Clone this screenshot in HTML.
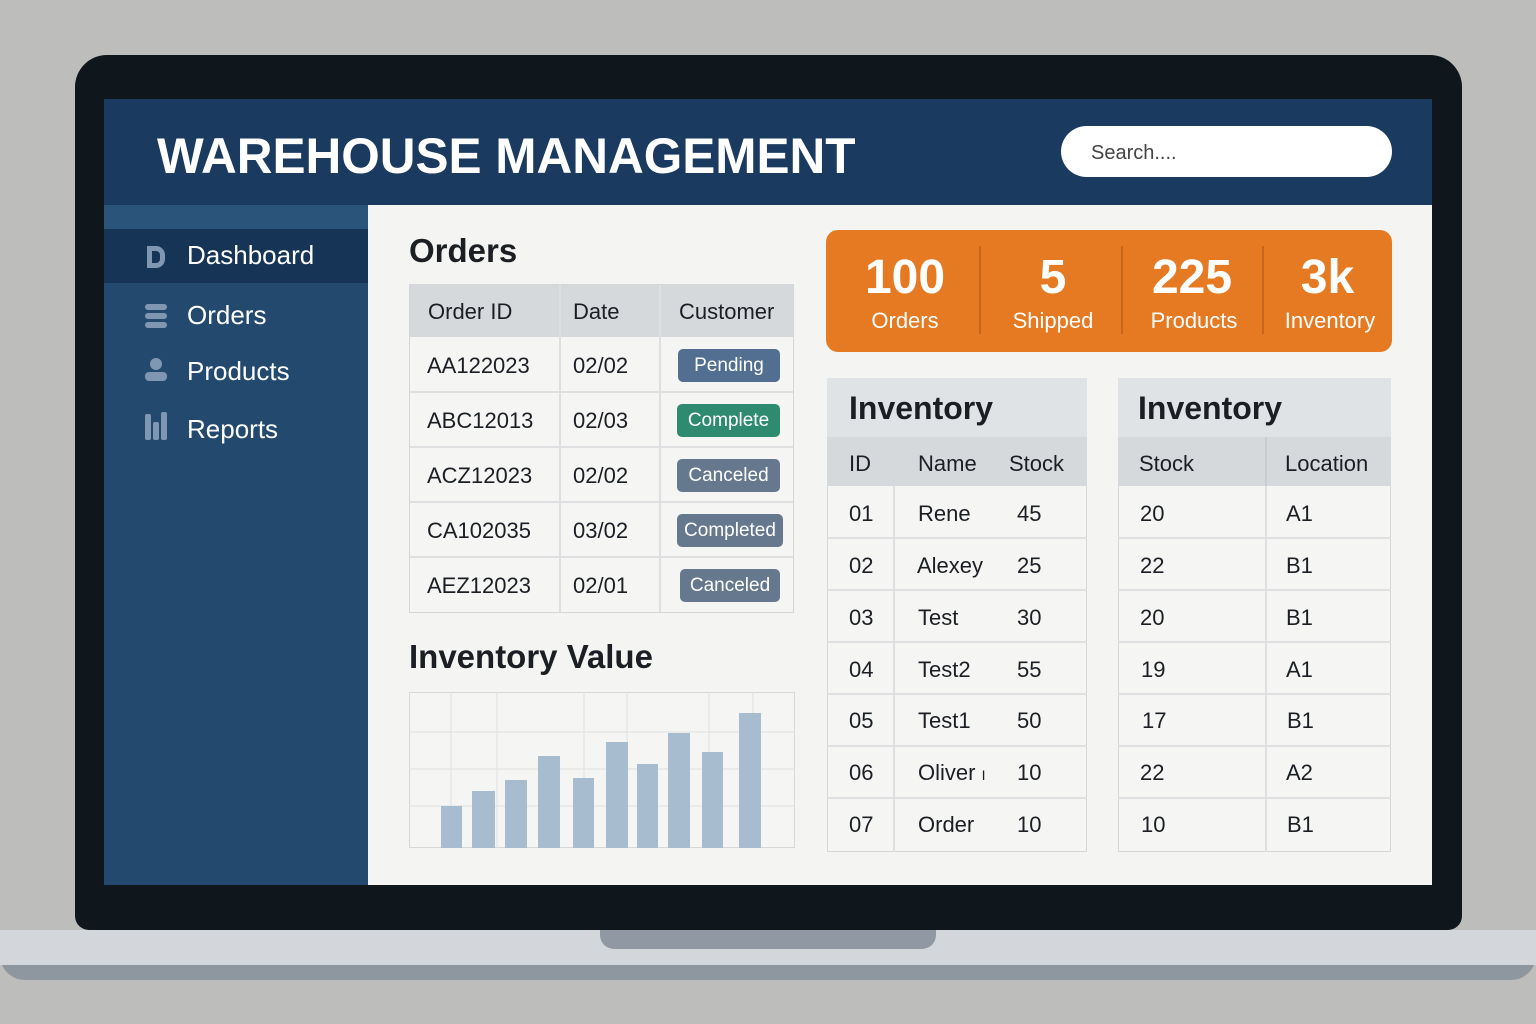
<!DOCTYPE html>
<html><head><meta charset="utf-8"><style>
*{margin:0;padding:0;box-sizing:border-box}
body{width:1536px;height:1024px;background:#bdbdbb;position:relative;overflow:hidden;font-family:"Liberation Sans","DejaVu Sans",sans-serif}
div{position:absolute}
.t{white-space:nowrap;color:#1b1f24;font-size:22px;line-height:1}
.w{color:#fff}
.hl{background:#d6d9dc}
.bd{border:1px solid #d4d6d8}
.hline{height:2px;background:#dedfe0}
.vline{width:2px;background:#dedfe0}
.badge{color:#fff;font-size:19px;border-radius:5px;text-align:center;line-height:33px;height:33px}
</style></head><body>
<div style="left:0;top:955px;width:1536px;height:25px;background:#8e96a0;border-radius:0 0 60px 60px"></div>
<div style="left:0;top:930px;width:1536px;height:35px;background:#d3d6da"></div>
<div style="left:600px;top:930px;width:336px;height:19px;background:#8f98a3;border-radius:0 0 14px 14px"></div>
<div style="left:75px;top:55px;width:1387px;height:875px;background:#0f161c;border-radius:32px 32px 14px 14px"></div>
<div style="left:104px;top:99px;width:1328px;height:786px;background:#f4f4f2"></div>
<div style="left:104px;top:99px;width:1328px;height:106px;background:#1a3a5f"></div>
<div class="t w" style="left:157px;top:131px;font-size:50px;font-weight:bold;transform:scaleX(0.99);transform-origin:left">WAREHOUSE MANAGEMENT</div>
<div style="left:1061px;top:126px;width:331px;height:51px;background:#fff;border-radius:26px"></div>
<div class="t" style="left:1091px;top:143px;font-size:20px;color:#444">Search....</div>
<div style="left:104px;top:205px;width:264px;height:680px;background:#234a6e"></div>
<div style="left:104px;top:205px;width:264px;height:24px;background:#2a547a"></div>
<div style="left:104px;top:229px;width:264px;height:54px;background:#163456"></div>
<svg style="position:absolute;left:145px;top:244px" width="22" height="26" viewBox="0 0 22 26"><path d="M2 2h9a9 9 0 0 1 9 9v4a9 9 0 0 1-9 9H2z" fill="#7f97b2"/><path d="M7 7h4a4 4 0 0 1 4 4v4a4 4 0 0 1-4 4H7z" fill="#163456"/></svg>
<div class="t w" style="left:187px;top:242px;font-size:26px">Dashboard</div>
<svg style="position:absolute;left:145px;top:304px" width="22" height="24"><rect x="0" y="0" width="22" height="6" rx="3" fill="#7f97b2"/><rect x="0" y="9" width="22" height="6" rx="3" fill="#7f97b2"/><rect x="0" y="18" width="22" height="6" rx="3" fill="#7f97b2"/></svg>
<div class="t w" style="left:187px;top:302px;font-size:26px">Orders</div>
<svg style="position:absolute;left:145px;top:358px" width="22" height="24"><circle cx="11" cy="6" r="6" fill="#7f97b2"/><rect x="0" y="14" width="22" height="9" rx="4" fill="#7f97b2"/></svg>
<div class="t w" style="left:187px;top:358px;font-size:26px">Products</div>
<svg style="position:absolute;left:145px;top:412px" width="22" height="28"><rect x="0" y="2" width="6" height="26" rx="2" fill="#7f97b2"/><rect x="8" y="10" width="6" height="18" rx="2" fill="#7f97b2"/><rect x="16" y="0" width="6" height="28" rx="2" fill="#7f97b2"/></svg>
<div class="t w" style="left:187px;top:416px;font-size:26px">Reports</div>

<div class="t" style="left:409px;top:234px;font-size:33px;font-weight:bold">Orders</div>
<div class="bd" style="left:409px;top:284px;width:385px;height:329px;background:#f5f5f4"></div>
<div class="hl" style="left:410px;top:285px;width:383px;height:52px"></div>
<div class="vline" style="left:559px;top:285px;height:327px"></div>
<div class="vline" style="left:659px;top:285px;height:327px"></div>
<div class="hline" style="left:410px;top:391px;width:383px"></div>
<div class="hline" style="left:410px;top:446px;width:383px"></div>
<div class="hline" style="left:410px;top:501px;width:383px"></div>
<div class="hline" style="left:410px;top:556px;width:383px"></div>
<div class="t" style="left:428px;top:301px">Order ID</div>
<div class="t" style="left:573px;top:301px">Date</div>
<div class="t" style="left:679px;top:301px">Customer</div>
<div class="t" style="left:427px;top:355px">AA122023</div><div class="t" style="left:573px;top:355px">02/02</div>
<div class="badge" style="left:678px;top:349px;width:102px;background:#526e91">Pending</div>
<div class="t" style="left:427px;top:410px">ABC12013</div><div class="t" style="left:573px;top:410px">02/03</div>
<div class="badge" style="left:677px;top:404px;width:103px;background:#2f8b6f">Complete</div>
<div class="t" style="left:427px;top:465px">ACZ12023</div><div class="t" style="left:573px;top:465px">02/02</div>
<div class="badge" style="left:677px;top:459px;width:103px;background:#66788d">Canceled</div>
<div class="t" style="left:427px;top:520px">CA102035</div><div class="t" style="left:573px;top:520px">03/02</div>
<div class="badge" style="left:677px;top:514px;width:106px;background:#66788d">Completed</div>
<div class="t" style="left:427px;top:575px">AEZ12023</div><div class="t" style="left:573px;top:575px">02/01</div>
<div class="badge" style="left:680px;top:569px;width:100px;background:#66788d">Canceled</div>

<div class="t" style="left:409px;top:640px;font-size:33px;font-weight:bold">Inventory Value</div>
<svg style="position:absolute;left:409px;top:692px" width="386" height="156">
<rect x="0.5" y="0.5" width="385" height="155" fill="#f5f5f4" stroke="#d8d8d8"/>
<g stroke="#e0e0e0"><line x1="0" y1="40" x2="386" y2="40"/><line x1="0" y1="77" x2="386" y2="77"/><line x1="0" y1="114" x2="386" y2="114"/>
<line x1="42" y1="0" x2="42" y2="156"/><line x1="88" y1="0" x2="88" y2="156"/><line x1="175" y1="0" x2="175" y2="156"/><line x1="218" y1="0" x2="218" y2="156"/><line x1="300" y1="0" x2="300" y2="156"/><line x1="344" y1="0" x2="344" y2="156"/></g>
<g fill="#a7bccf"><rect x="32" y="114" width="21" height="42"/><rect x="63" y="99" width="23" height="57"/><rect x="96" y="88" width="22" height="68"/><rect x="129" y="64" width="22" height="92"/><rect x="164" y="86" width="21" height="70"/><rect x="197" y="50" width="22" height="106"/><rect x="228" y="72" width="21" height="84"/><rect x="259" y="41" width="22" height="115"/><rect x="293" y="60" width="21" height="96"/><rect x="330" y="21" width="22" height="135"/></g>
</svg>

<div style="left:826px;top:230px;width:566px;height:122px;background:#e67a22;border-radius:12px"></div>
<div style="left:979px;top:246px;width:2px;height:88px;background:#c9651a"></div>
<div style="left:1121px;top:246px;width:2px;height:88px;background:#c9651a"></div>
<div style="left:1262px;top:246px;width:2px;height:88px;background:#c9651a"></div>
<div class="t w" style="left:826px;width:158px;text-align:center;top:254px;font-size:48px;font-weight:bold">100</div>
<div class="t w" style="left:826px;width:158px;text-align:center;top:310px;font-size:22px">Orders</div>
<div class="t w" style="left:980px;width:146px;text-align:center;top:254px;font-size:48px;font-weight:bold">5</div>
<div class="t w" style="left:980px;width:146px;text-align:center;top:310px;font-size:22px">Shipped</div>
<div class="t w" style="left:1122px;width:140px;text-align:center;top:254px;font-size:48px;font-weight:bold">225</div>
<div class="t w" style="left:1122px;width:144px;text-align:center;top:310px;font-size:22px">Products</div>
<div class="t w" style="left:1263px;width:129px;text-align:center;top:254px;font-size:48px;font-weight:bold">3k</div>
<div class="t w" style="left:1263px;width:134px;text-align:center;top:310px;font-size:22px">Inventory</div>

<div class="bd" style="left:827px;top:378px;width:260px;height:474px;background:#f5f5f4"></div>
<div style="left:827px;top:378px;width:260px;height:59px;background:#e0e3e5"></div>
<div class="hl" style="left:827px;top:437px;width:260px;height:49px"></div>
<div class="t" style="left:849px;top:392px;font-size:32px;font-weight:bold">Inventory</div>
<div class="vline" style="left:893px;top:486px;height:366px"></div>
<div class="t" style="left:849px;top:453px">ID</div><div class="t" style="left:918px;top:453px">Name</div><div class="t" style="left:1009px;top:453px">Stock</div>
<div class="bd" style="left:1118px;top:378px;width:273px;height:474px;background:#f5f5f4"></div>
<div style="left:1118px;top:378px;width:273px;height:59px;background:#e0e3e5"></div>
<div class="hl" style="left:1118px;top:437px;width:273px;height:49px"></div>
<div class="t" style="left:1138px;top:392px;font-size:32px;font-weight:bold">Inventory</div>
<div class="vline" style="left:1265px;top:437px;height:415px;background:#c9ccce"></div>
<div class="vline" style="left:1265px;top:486px;height:366px"></div>
<div class="t" style="left:1139px;top:453px">Stock</div><div class="t" style="left:1285px;top:453px">Location</div>

<div class="hline" style="left:827px;top:537px;width:260px"></div><div class="hline" style="left:1118px;top:537px;width:273px"></div>
<div class="hline" style="left:827px;top:589px;width:260px"></div><div class="hline" style="left:1118px;top:589px;width:273px"></div>
<div class="hline" style="left:827px;top:641px;width:260px"></div><div class="hline" style="left:1118px;top:641px;width:273px"></div>
<div class="hline" style="left:827px;top:693px;width:260px"></div><div class="hline" style="left:1118px;top:693px;width:273px"></div>
<div class="hline" style="left:827px;top:745px;width:260px"></div><div class="hline" style="left:1118px;top:745px;width:273px"></div>
<div class="hline" style="left:827px;top:797px;width:260px"></div><div class="hline" style="left:1118px;top:797px;width:273px"></div>

<div class="t" style="left:849px;top:503px">01</div><div class="t" style="left:918px;top:503px">Rene</div><div class="t" style="left:1017px;top:503px">45</div><div class="t" style="left:1140px;top:503px">20</div><div class="t" style="left:1286px;top:503px">A1</div>
<div class="t" style="left:849px;top:555px">02</div><div class="t" style="left:917px;top:555px">Alexey</div><div class="t" style="left:1017px;top:555px">25</div><div class="t" style="left:1140px;top:555px">22</div><div class="t" style="left:1286px;top:555px">B1</div>
<div class="t" style="left:849px;top:607px">03</div><div class="t" style="left:918px;top:607px">Test</div><div class="t" style="left:1017px;top:607px">30</div><div class="t" style="left:1140px;top:607px">20</div><div class="t" style="left:1286px;top:607px">B1</div>
<div class="t" style="left:849px;top:659px">04</div><div class="t" style="left:918px;top:659px">Test2</div><div class="t" style="left:1017px;top:659px">55</div><div class="t" style="left:1141px;top:659px">19</div><div class="t" style="left:1286px;top:659px">A1</div>
<div class="t" style="left:849px;top:710px">05</div><div class="t" style="left:918px;top:710px">Test1</div><div class="t" style="left:1017px;top:710px">50</div><div class="t" style="left:1142px;top:710px">17</div><div class="t" style="left:1287px;top:710px">B1</div>
<div class="t" style="left:849px;top:762px">06</div><div class="t" style="left:918px;top:762px">Oliver <span style="font-size:14px">I</span></div><div class="t" style="left:1017px;top:762px">10</div><div class="t" style="left:1140px;top:762px">22</div><div class="t" style="left:1286px;top:762px">A2</div>
<div class="t" style="left:849px;top:814px">07</div><div class="t" style="left:918px;top:814px">Order</div><div class="t" style="left:1017px;top:814px">10</div><div class="t" style="left:1141px;top:814px">10</div><div class="t" style="left:1287px;top:814px">B1</div>
</body></html>
